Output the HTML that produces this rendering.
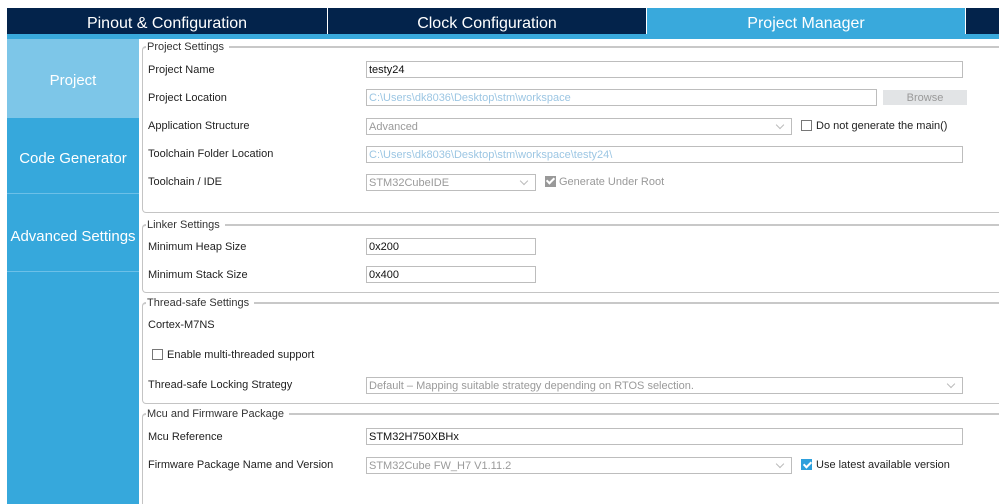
<!DOCTYPE html>
<html style="overflow:hidden"><head><meta charset="utf-8"><style>
*{box-sizing:border-box;margin:0;padding:0}
html,body{width:999px;height:504px;overflow:hidden}
body{background:#fff;position:relative;font-family:"Liberation Sans",Arial,sans-serif}
.a{position:absolute}
.tab{position:absolute;top:8px;height:26px;background:#03234b;color:#fff;font-size:16px;text-align:center;line-height:31px}
.side{position:absolute;left:7px;width:132px;color:#fff;font-size:15px;text-align:center}
.grp{position:absolute;left:142px;width:870px;border:1px solid #c4c4c4;border-top:2px solid #c8c8c8;border-radius:4px 0 0 4px}
.gt{position:absolute;top:-8px;left:3px;background:#fff;padding:0 5px 0 1px;font-size:11px;color:#333;line-height:14px}
.lb{position:absolute;left:148px;font-size:11px;color:#222;line-height:17px}
.in{position:absolute;left:366px;height:17px;border:1px solid #bdbdbd;font-size:11px;line-height:17px;padding-left:2px;color:#111;background:#fff}
.dis{color:#9cc6e3}
.gr{color:#9a9a9a}
.dd::after{content:"";position:absolute;right:8px;top:3px;width:5px;height:5px;border-right:1px solid #bbb;border-bottom:1px solid #bbb;transform:rotate(45deg)}
.cb{position:absolute;width:11px;height:11px;border:1px solid #777;background:#fff}
.ck{background:#2d9fdc;border-color:#2d9fdc}
.ck::after{content:"";position:absolute;left:3px;top:0px;width:3px;height:6px;border-right:2px solid #fff;border-bottom:2px solid #fff;transform:rotate(45deg)}
.ckg{background:#999;border-color:#999}
</style></head><body>
<div class="tab" style="left:7px;width:320px">Pinout &amp; Configuration</div>
<div class="tab" style="left:328px;width:318px">Clock Configuration</div>
<div class="tab" style="left:647px;width:318px;background:#39a9dc">Project Manager</div>
<div class="tab" style="left:966px;width:33px"></div>
<div class="a" style="left:7px;top:34px;width:992px;height:5px;background:#39a9dc"></div>
<div class="a" style="left:140px;top:39px;width:859px;height:465px;background:#fff"></div>
<div class="side" style="top:39px;height:79px;background:#7dc6e8;line-height:84px">Project</div>
<div class="side" style="top:118px;height:386px;background:#36a8dc"></div>
<div class="side" style="top:118px;height:75px;line-height:82px">Code Generator</div>
<div class="a" style="left:7px;top:193px;width:132px;height:1px;background:#6cc0e8"></div>
<div class="side" style="top:194px;height:77px;line-height:86px">Advanced Settings</div>
<div class="a" style="left:7px;top:271px;width:132px;height:1px;background:#6cc0e8"></div>

<div class="grp" style="top:46px;height:167px"><div class="gt">Project Settings</div></div>
<div class="grp" style="top:224px;height:69px"><div class="gt">Linker Settings</div></div>
<div class="grp" style="top:302px;height:102px"><div class="gt">Thread-safe Settings</div></div>
<div class="grp" style="top:413px;height:100px"><div class="gt">Mcu and Firmware Package</div></div>

<div class="lb" style="top:62px">Project Name</div>
<div class="in" style="top:61px;width:597px">testy24</div>
<div class="lb" style="top:90px">Project Location</div>
<div class="in dis" style="top:89px;width:511px">C:\Users\dk8036\Desktop\stm\workspace</div>
<div class="a" style="left:883px;top:90px;width:84px;height:15px;background:#e2e4e6;color:#999;font-size:11px;text-align:center;line-height:17px">Browse</div>
<div class="lb" style="top:118px">Application Structure</div>
<div class="in gr dd" style="top:118px;width:426px">Advanced</div>
<div class="cb" style="left:801px;top:120px"></div>
<div class="lb" style="left:816px;top:118px">Do not generate the main()</div>
<div class="lb" style="top:146px">Toolchain Folder Location</div>
<div class="in dis" style="top:146px;width:597px">C:\Users\dk8036\Desktop\stm\workspace\testy24\</div>
<div class="lb" style="top:174px">Toolchain / IDE</div>
<div class="in gr dd" style="top:174px;width:170px">STM32CubeIDE</div>
<div class="cb ckg" style="left:545px;top:176px"><div class="ck" style="position:absolute;left:-1px;top:-1px;width:11px;height:11px;background:none;border:none"></div></div>
<div class="lb gr" style="left:559px;top:174px;color:#999">Generate Under Root</div>

<div class="lb" style="top:239px">Minimum Heap Size</div>
<div class="in" style="top:238px;width:170px">0x200</div>
<div class="lb" style="top:267px">Minimum Stack Size</div>
<div class="in" style="top:266px;width:170px">0x400</div>

<div class="lb" style="top:317px">Cortex-M7NS</div>
<div class="cb" style="left:152px;top:349px"></div>
<div class="lb" style="left:167px;top:347px">Enable multi-threaded support</div>
<div class="lb" style="top:377px">Thread-safe Locking Strategy</div>
<div class="in gr dd" style="top:377px;width:597px">Default – Mapping suitable strategy depending on RTOS selection.</div>

<div class="lb" style="top:429px">Mcu Reference</div>
<div class="in" style="top:428px;width:597px">STM32H750XBHx</div>
<div class="lb" style="top:457px">Firmware Package Name and Version</div>
<div class="in gr dd" style="top:457px;width:426px">STM32Cube FW_H7 V1.11.2</div>
<div class="cb ck" style="left:801px;top:459px"></div>
<div class="lb" style="left:816px;top:457px">Use latest available version</div>
</body></html>
